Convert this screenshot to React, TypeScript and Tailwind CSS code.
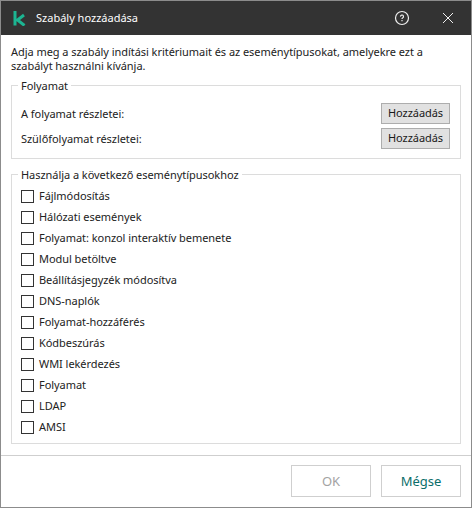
import React from 'react';

const events = [
  'Fájlmódosítás',
  'Hálózati események',
  'Folyamat: konzol interaktív bemenete',
  'Modul betöltve',
  'Beállításjegyzék módosítva',
  'DNS-naplók',
  'Folyamat-hozzáférés',
  'Kódbeszúrás',
  'WMI lekérdezés',
  'Folyamat',
  'LDAP',
  'AMSI',
];

const AddRow = ({ label }: { label: string }) => (
  <div className="flex items-center justify-between h-[21px]">
    <span className="pt-[2px]">{label}</span>
    <button className="w-[69px] h-[21px] bg-[#e1e1e1] border border-[#adadad] text-[#1a1a1a]">Hozzáadás</button>
  </div>
);

export default function App() {
  return (
    <div className="w-[472px] h-[508px] flex flex-col bg-white border border-[#8c8c8c] text-[11px] tracking-[-0.05px] text-[#222] font-['Noto_Sans',sans-serif] overflow-hidden">
      <div className="h-[34px] shrink-0 bg-[#333333] flex items-center text-white">
        <svg width="13" height="15" viewBox="0 0 13 15" className="ml-[12px]">
          <path d="M2 0V14.5M11 4L4.5 9L11.5 14.5" fill="none" stroke="#1cb592" strokeWidth="3" />
        </svg>
        <span className="ml-[10px] text-[11px] tracking-normal">Szabály hozzáadása</span>
        <svg width="16" height="16" viewBox="0 0 16 16" className="ml-auto" fill="none" stroke="#f0f0f0" strokeWidth="1.2">
          <circle cx="8" cy="8" r="6.5" />
          <path d="M6.5 6.6a1.5 1.5 0 1 1 2.3 1.2c-.6.3-.8.5-.8 1.1M8 10v1.2" />
        </svg>
        <svg width="14" height="14" viewBox="0 0 14 14" className="ml-[31px] mr-[16px]" fill="none" stroke="#f0f0f0">
          <path d="M2 2L12 12M12 2L2 12" />
        </svg>
      </div>
      <div className="flex-1 flex flex-col px-[10px]">
        <p className="mt-[10px] leading-[14px]">
          Adja meg a szabály indítási kritériumait és az eseménytípusokat, amelyekre ezt a szabályt használni kívánja.
        </p>
        <fieldset className="mt-[5px] h-[81px] border border-[#dcdcdc] pl-[9px] pr-[10px] pt-[10px]">
          <legend className="ml-[-3px] px-[3px] leading-[15px]">Folyamat</legend>
          <div className="flex flex-col gap-[4px]">
            <AddRow label="A folyamat részletei:" />
            <AddRow label="Szülőfolyamat részletei:" />
          </div>
        </fieldset>
        <fieldset className="mt-[8px] h-[277px] border border-[#dcdcdc] pl-[9px] pt-[8px]">
          <legend className="ml-[-3px] px-[3px] leading-[15px]">Használja a következő eseménytípusokhoz</legend>
          <div className="flex flex-col gap-[8px]">
            {events.map((e) => (
              <label key={e} className="flex items-center h-[13px]">
                <span className="w-[13px] h-[13px] border border-[#333] bg-white shrink-0" />
                <span className="ml-[5px]">{e}</span>
              </label>
            ))}
          </div>
        </fieldset>
      </div>
      <div className="h-[52px] shrink-0 border-t border-[#cfcfcf] flex justify-end gap-[10px] pt-[9px] pr-[10px]">
        <button className="w-[80px] h-[32px] pt-[1px] border border-[#cfcfcf] text-[#a3a3a3] text-[13px]">OK</button>
        <button className="w-[80px] h-[32px] pt-[1px] border border-[#cfcfcf] text-[#0b6e6a] text-[13px]">Mégse</button>
      </div>
    </div>
  );
}
